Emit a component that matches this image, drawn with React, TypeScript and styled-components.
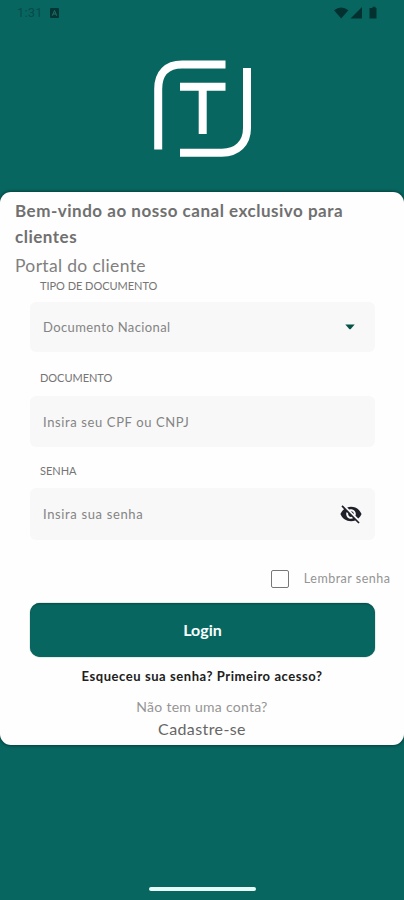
import React from 'react';
import styled, { createGlobalStyle } from 'styled-components';

const GlobalStyle = createGlobalStyle`
  * { box-sizing: border-box; }
  body { margin: 0; background: #086661; font-family: Lato, "Liberation Sans", sans-serif; }
`;

const Screen = styled.main`
  width: 404px;
  height: 900px;
  display: flex;
  flex-direction: column;
  background: #086661;
  overflow: hidden;
`;

const StatusBar = styled.header`
  height: 26px;
  flex: none;
  display: flex;
  align-items: center;
  justify-content: space-between;
  padding: 0 26px 0 17px;
  color: #064b48;
`;

const StatusGroup = styled.div`
  display: flex;
  align-items: center;
`;

const Clock = styled.span`
  font: 400 13px/16px Roboto, sans-serif;
  letter-spacing: 0.2px;
  width: 33px;
`;

const LogoArea = styled.div`
  height: 166px;
  flex: none;
  display: flex;
  justify-content: center;
  padding-top: 34px;
`;

const Card = styled.section`
  height: 553px;
  flex: none;
  display: flex;
  flex-direction: column;
  background: #fefefe;
  border-radius: 11px;
  box-shadow: 0 0 3px 1px rgba(0, 40, 36, 0.6);
`;

const Heading = styled.h1`
  margin: 6px 15px 0;
  font-size: 17px;
  line-height: 26px;
  font-weight: 700;
  letter-spacing: 0.51px;
  color: #707070;
`;

const Subheading = styled.p`
  margin: 3px 15px 0;
  font-size: 17.5px;
  line-height: 26px;
  letter-spacing: 0.33px;
  color: #808080;
`;

const Form = styled.form`
  padding: 0 29px 0 30px;
  display: flex;
  flex-direction: column;
`;

const Label = styled.label<{ $gap: number }>`
  margin: ${(p) => p.$gap}px 0 0 10px;
  height: 14px;
  font-size: 11px;
  line-height: 14px;
  letter-spacing: -0.03px;
  color: #757575;
`;

const Field = styled.div<{ $gap: number; $height: number }>`
  margin-top: ${(p) => p.$gap}px;
  height: ${(p) => p.$height}px;
  display: flex;
  align-items: center;
  justify-content: space-between;
  padding: 0 12px 0 13px;
  background: #f8f8f8;
  border-radius: 6px;
`;

const FieldText = styled.span<{ $spacing: number }>`
  font-size: 13px;
  line-height: 18px;
  letter-spacing: ${(p) => p.$spacing}px;
  color: #848484;
`;

const Remember = styled.div`
  height: 20px;
  margin: 29px -15.5px 0 0;
  display: flex;
  align-items: center;
  justify-content: flex-end;
  gap: 15px;
  font-size: 12.5px;
  line-height: 18px;
  letter-spacing: 0.5px;
  color: #949494;
`;

const Checkbox = styled.span`
  width: 18px;
  height: 18px;
  border: 1.5px solid #777;
  border-radius: 2px;
`;

const LoginButton = styled.button`
  height: 54px;
  margin-top: 14px;
  padding: 0;
  border: 0;
  border-radius: 10px;
  background: #086661;
  box-shadow: inset 0 2px 2px -1px #064b43, 0 0 1px #064b43;
  color: #f6fffd;
  font: 700 16px/20px Lato, sans-serif;
`;

const Footer = styled.footer`
  display: flex;
  flex-direction: column;
  align-items: center;
`;

const Recover = styled.strong`
  margin-top: 10px;
  font-size: 13px;
  line-height: 18px;
  letter-spacing: 0.57px;
  color: #202020;
`;

const Question = styled.span`
  margin-top: 13px;
  font-size: 14px;
  line-height: 18px;
  letter-spacing: 0.27px;
  color: #959595;
`;

const Register = styled.span`
  margin-top: 3px;
  font-size: 16px;
  line-height: 20px;
  letter-spacing: 0.4px;
  color: #666;
`;

const NavigationArea = styled.div`
  flex: 1;
  display: flex;
  align-items: flex-end;
  justify-content: center;
  padding-bottom: 9px;
`;

const HomeIndicator = styled.div`
  width: 107px;
  height: 4px;
  border-radius: 2px;
  background: #e6fbf5;
`;

export default function App() {
  return (
    <>
      <GlobalStyle />
      <Screen>
        <StatusBar>
          <StatusGroup>
            <Clock>1:31</Clock>
            <svg width="9" height="10" viewBox="0 0 9 10">
              <rect width="9" height="10" rx="1" fill="#043633" />
              <path d="M2.3 7.7 4.5 2.5l2.2 5.2M3.1 6h2.8" fill="none" stroke="#237069" />
            </svg>
          </StatusGroup>
          <StatusGroup>
            <svg width="44" height="14" viewBox="0 0 44 14" fill="#03312f">
              <path d="M0 4.2Q7.2-1.3 14.4 4.2L7.2 12.5Z" />
              <path d="M16.5 12.5H28V1Z" />
              <path d="M36.5 2h2V.8h3V2h1v10.5h-7V2Z" />
            </svg>
          </StatusGroup>
        </StatusBar>
        <LogoArea>
          <svg width="98" height="98" viewBox="0 0 98 98" fill="none" stroke="#fff" strokeWidth="8">
            <path d="M5.2 89.5V29C5.2 13 14 4.5 29 4.5H72.5" />
            <path d="M94 8V68C94 83.5 84 92.7 69 92.7H27" />
            <path d="M27 26.7H72.5M49.7 30V74" />
          </svg>
        </LogoArea>
        <Card>
          <Heading>Bem-vindo ao nosso canal exclusivo para clientes</Heading>
          <Subheading>Portal do cliente</Subheading>
          <Form>
            <Label $gap={0}>TIPO DE DOCUMENTO</Label>
            <Field $gap={9} $height={50}>
              <FieldText $spacing={0.4}>Documento Nacional</FieldText>
              <svg width="26" height="10" viewBox="0 0 26 10">
                <path d="M8.3 2.5h9.4L14 6.8Q13 7.8 12 6.8Z" fill="#065347" />
              </svg>
            </Field>
            <Label $gap={19}>DOCUMENTO</Label>
            <Field $gap={11} $height={51}>
              <FieldText $spacing={0.62}>Insira seu CPF ou CNPJ</FieldText>
            </Field>
            <Label $gap={17}>SENHA</Label>
            <Field $gap={10} $height={52}>
              <FieldText $spacing={0.64}>Insira sua senha</FieldText>
              <svg width="24" height="24" viewBox="-0.5 -0.5 25 25" fill="#20202a">
                <path d="M12 7c2.76 0 5 2.24 5 5 0 .65-.13 1.26-.36 1.83l2.92 2.92c1.51-1.26 2.7-2.89 3.43-4.75-1.73-4.39-6-7.5-11-7.5-1.4 0-2.74.25-3.98.7l2.16 2.16C10.74 7.13 11.35 7 12 7zM2 4.27l2.28 2.28.46.46C3.08 8.3 1.78 10.02 1 12c1.73 4.39 6 7.5 11 7.5 1.55 0 3.03-.3 4.38-.84l.42.42L19.73 22 21 20.73 3.27 3 2 4.27zM7.53 9.8l1.55 1.55c-.05.21-.08.43-.08.65 0 1.66 1.34 3 3 3 .22 0 .44-.03.65-.08l1.55 1.55c-.67.33-1.41.53-2.2.53-2.76 0-5-2.24-5-5 0-.79.2-1.53.53-2.2zm4.31-.78l3.15 3.15.02-.16c0-1.66-1.34-3-3-3l-.17.01z" />
              </svg>
            </Field>
            <Remember>
              <Checkbox role="checkbox" aria-checked={false} />
              <span>Lembrar senha</span>
            </Remember>
            <LoginButton type="button">Login</LoginButton>
          </Form>
          <Footer>
            <Recover>Esqueceu sua senha? Primeiro acesso?</Recover>
            <Question>Não tem uma conta?</Question>
            <Register>Cadastre-se</Register>
          </Footer>
        </Card>
        <NavigationArea>
          <HomeIndicator />
        </NavigationArea>
      </Screen>
    </>
  );
}
